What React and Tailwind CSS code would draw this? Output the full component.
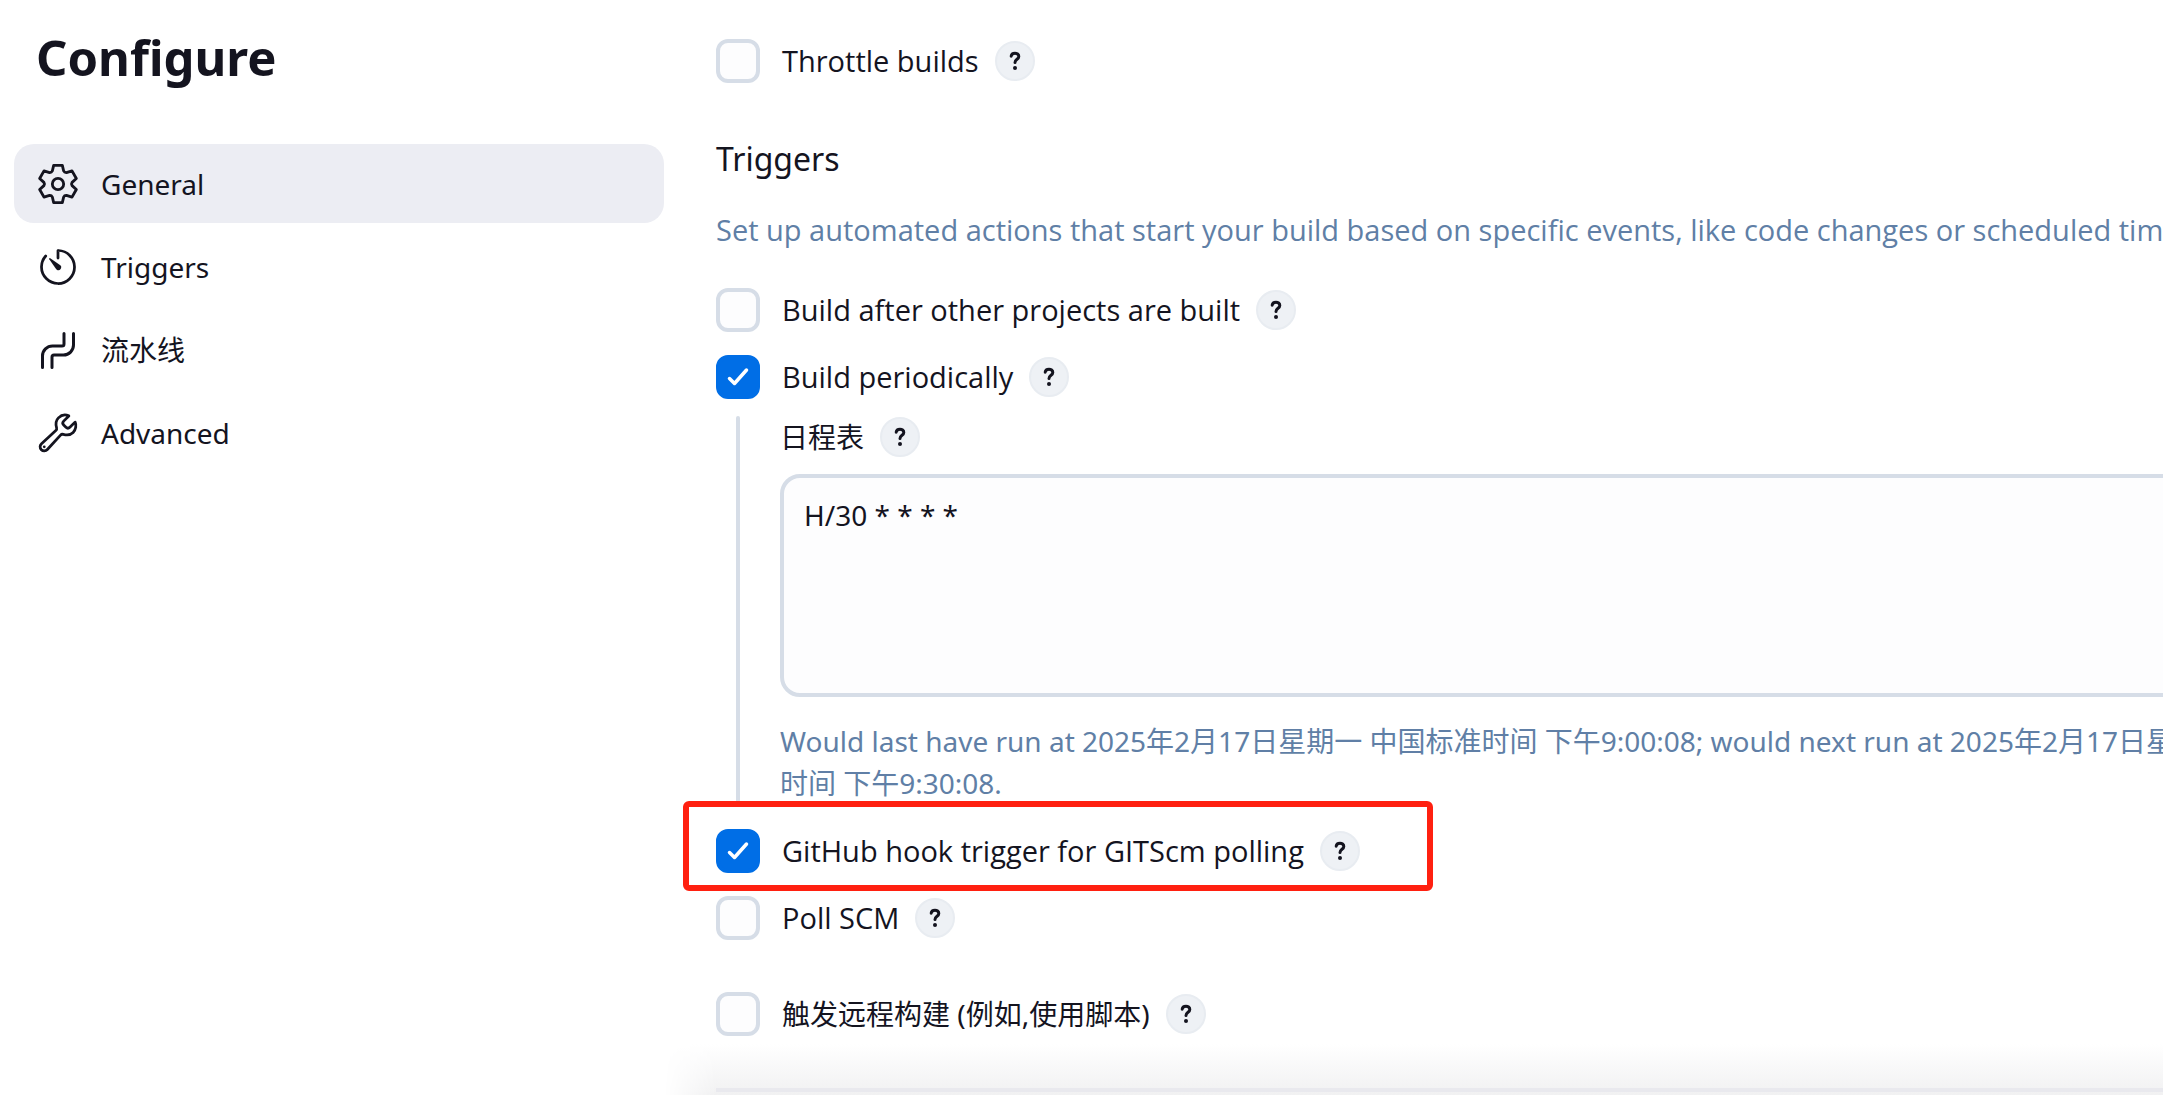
import { useState } from 'react';

function GearIcon() {
  return (
    <svg viewBox="-66 -66 132 132" className="size-11 shrink-0" fill="none" stroke="currentColor" strokeWidth="8.5" strokeLinecap="round" strokeLinejoin="round">
      <path d="M-13-56H13L17-39Q19.500-33.800 25.300-34.200L42-39.300L55-16.700L42.300-4.800Q39 0 42.300 4.800L55 16.700L42 39.300L25.300 34.200Q19.500 33.800 17 39L13 56H-13L-17 39Q-19.500 33.800-25.300 34.200L-42 39.300L-55 16.700L-42.300 4.800Q-39 0-42.300-4.800L-55-16.700L-42-39.300L-25.300-34.200Q-19.500-33.800-17-39Z" />
      <circle r="17" />
    </svg>
  );
}

function TimerIcon() {
  return (
    <svg viewBox="0 0 512 512" className="size-11 shrink-0" fill="none" stroke="currentColor" strokeWidth="32" strokeLinecap="round" strokeLinejoin="round">
      <path d="M112.91 128A191.85 191.85 0 0064 254c-1.18 106.35 85.65 193.8 192 194 106.2.2 192-85.83 192-192 0-104.54-83.55-189.61-187.5-192a4.36 4.36 0 00-4.5 4.37V152" />
      <path d="M233.38 278.63l-79-113a8.13 8.13 0 0111.32-11.32l113 79a32.5 32.5 0 01-37.25 53.26 33.21 33.21 0 01-8.07-7.94z" fill="currentColor" stroke="none" />
    </svg>
  );
}

function PipelineIcon() {
  return (
    <svg viewBox="0 0 44 44" className="size-11 shrink-0" fill="none" stroke="currentColor" strokeWidth="3" strokeLinecap="round" strokeLinejoin="round">
      <path d="M6.500 39.500V28a10 10 0 0110-10h9.500a2 2 0 002-2V5.500" />
      <path d="M16 39.500V29a2 2 0 012-2h9.500a10 10 0 0010-10V5.500" />
    </svg>
  );
}

function WrenchIcon() {
  return (
    <svg viewBox="0 0 512 512" className="size-11 shrink-0" fill="none" stroke="currentColor" strokeWidth="32" strokeLinecap="round" strokeLinejoin="round">
      <path d="M393.87 190a32.1 32.1 0 01-45.25 0l-26.57-26.57a32.09 32.09 0 010-45.26L382.19 58a1 1 0 00-.3-1.64c-38.82-16.64-89.15-8.16-121.11 23.57-30.58 30.35-32.32 76-21.12 115.84a31.93 31.93 0 01-9.06 32.08L64 380a48.17 48.17 0 1068 68l153.86-167a31.93 31.93 0 0131.6-9.13c39.54 10.59 84.54 8.6 114.72-21.19 32.49-32 39.5-88.56 23.75-120.93a1 1 0 00-1.6-.26z" />
      <circle cx="96" cy="416" r="16" fill="currentColor" stroke="none" />
    </svg>
  );
}

const NAV = [
  { id: 'general', label: 'General', icon: GearIcon },
  { id: 'triggers', label: 'Triggers', icon: TimerIcon },
  { id: 'pipeline', label: '流水线', icon: PipelineIcon },
  { id: 'advanced', label: 'Advanced', icon: WrenchIcon },
];

function HelpButton({ topic }) {
  return (
    <button
      type="button"
      aria-label={`Help for feature: ${topic}`}
      className="flex size-10 shrink-0 items-center justify-center rounded-full border-2 border-[#e8ecf1] bg-[#eef1f5]"
    >
      <svg viewBox="0 0 20 20" className="size-5" fill="none" stroke="currentColor" strokeWidth="3" strokeLinecap="round" strokeLinejoin="round">
        <path d="M6.200 5.200C6.400 3.200 8 2.200 10 2.200s3.800 1.200 3.800 3.200c0 2.800-3.800 3-3.800 6.100" />
        <circle cx="10" cy="17" r="2" fill="currentColor" stroke="none" />
      </svg>
    </button>
  );
}

function CheckRow({ id, label, lang = 'en', defaultChecked = false }) {
  const [checked, setChecked] = useState(defaultChecked);

  return (
    <div className="flex h-11 items-center gap-4">
      <div className="flex items-center gap-[22px]">
        <span className="relative flex size-11 shrink-0">
          <input
            id={id}
            type="checkbox"
            checked={checked}
            onChange={e => setChecked(e.target.checked)}
            className="size-11 appearance-none rounded-xl border-4 border-[#d6dde7] bg-[#fdfdfe] checked:border-[#006ee6] checked:bg-[#006ee6]"
          />
          {checked && (
            <svg viewBox="0 0 44 44" className="pointer-events-none absolute inset-0" fill="none" stroke="white" strokeWidth="3.5" strokeLinecap="round" strokeLinejoin="round">
              <path d="M13.500 23.500l5 5L30.500 15" />
            </svg>
          )}
        </span>
        <label
          htmlFor={id}
          lang={lang}
          className={lang === 'en' ? "font-['Open_Sans',sans-serif] text-[29px] leading-[42px] whitespace-nowrap" : 'whitespace-nowrap'}
        >
          {label}
        </label>
      </div>
      <HelpButton topic={label} />
    </div>
  );
}

export default function App() {
  const [active, setActive] = useState('general');
  const [schedule, setSchedule] = useState('H/30 * * * *');

  return (
    <div className="flex min-h-screen items-start overflow-hidden bg-white font-['Noto_Sans','Noto_Sans_CJK_SC',sans-serif] text-[28px] leading-[42px] text-[#14141f]">
      <aside className="ml-3.5 w-[650px] shrink-0 pt-6">
        <h1 className="pl-[22px] text-[49px] leading-[66px] font-bold">Configure</h1>
        <nav className="mt-[54px] flex flex-col gap-1">
          {NAV.map(({ id, label, icon: Icon }) => (
            <button
              key={id}
              type="button"
              onClick={() => setActive(id)}
              className={
                active === id
                  ? 'flex h-[79px] items-center gap-[21px] rounded-[20px] bg-[#ecedf3] px-[22px] text-left'
                  : 'flex h-[79px] items-center gap-[21px] rounded-[20px] px-[22px] text-left'
              }
            >
              <Icon />
              {label}
            </button>
          ))}
        </nav>
      </aside>

      {/* settings form, runs past the right edge of the window */}
      <main className="-mr-[200px] ml-[52px] min-w-0 flex-1 pt-[39px]">
        <CheckRow id="throttle" label="Throttle builds" />

        <section>
          <h2 className="mt-[54px] text-[32px] leading-[44px]">Triggers</h2>
          <p className="mt-7 font-['Open_Sans',sans-serif] text-[29px] leading-[42px] whitespace-nowrap text-[#607fa6]">
            Set up automated actions that start your build based on specific events, like code changes or scheduled times.
          </p>

          <div className="mt-[37px] flex flex-col gap-[23px]">
            <CheckRow id="upstream" label="Build after other projects are built" />
            <CheckRow id="periodic" label="Build periodically" defaultChecked />
          </div>

          <div className="mt-[17px] ml-5 flex gap-10">
            <div className="w-1 shrink-0 rounded-full bg-[#d6dde7]" />
            <div className="min-w-0 flex-1">
              <div className="flex items-center gap-4">
                <label htmlFor="schedule">日程表</label>
                <HelpButton topic="日程表" />
              </div>
              <textarea
                id="schedule"
                value={schedule}
                onChange={e => setSchedule(e.target.value)}
                className="mt-4 block h-[223px] w-full resize-none rounded-[20px] border-4 border-[#d6dde7] bg-[#fdfdfe] px-5 py-4"
              />
              <p className="mt-[23px] text-[#607fa6]">
                Would last have run at 2025年2月17日星期一 中国标准时间 下午9:00:08; would next run at 2025年2月17日星期一 中国标准时间 下午9:30:08.
              </p>
            </div>
          </div>

          <div className="relative -mt-[3px] -ml-[33px] h-[90px] w-[750px] rounded-md border-6 border-[#ff2010] bg-white pt-[22px] pl-[27px]">
            <CheckRow id="github" label="GitHub hook trigger for GITScm polling" defaultChecked />
          </div>

          <div className="mt-[5px] flex flex-col gap-[52px]">
            <CheckRow id="scm" label="Poll SCM" />
            <CheckRow id="remote" label="触发远程构建 (例如,使用脚本)" lang="zh" />
          </div>
        </section>

        <footer className="mt-2 -ml-[52px] h-[51px] bg-linear-to-b from-white to-[#f1f1f2] mask-[linear-gradient(to_right,transparent,black_52px)] pt-11 pl-[52px]">
          <div className="h-1 bg-[#e9e9ee]" />
        </footer>
      </main>
    </div>
  );
}
